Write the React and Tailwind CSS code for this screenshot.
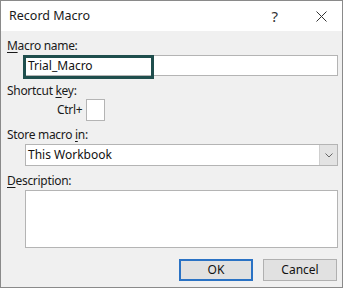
import React from 'react';

const font = { fontFamily: '"Noto Sans", "Liberation Sans", sans-serif' };

const Label = ({ pre, u, post, className = '' }) => (
  <div className={`h-[16px] leading-[16px] text-[12px] tracking-[-0.3px] text-[#1a1a1a] ${className}`}>
    {pre}
    <span className="underline underline-offset-2">{u}</span>
    {post}
  </div>
);

const RecordMacro = () => {
  return (
    <div className="w-[344px] h-[288px] bg-white" style={font}>
      <div className="w-[343px] h-[288px] border border-[#8a8a8a] flex flex-col">
        {/* title bar */}
        <div className="h-[30px] bg-white flex items-center pl-[8px] pr-[15px]">
          <span className="text-[12.5px] text-[#1a1a1a] flex-1">Record Macro</span>
          <span className="text-[15px] text-[#333] mr-[38px]">?</span>
          <svg width="11" height="11" viewBox="0 0 11 11">
            <path d="M0.5 0.5 L10.5 10.5 M10.5 0.5 L0.5 10.5" stroke="#333" strokeWidth="1" />
          </svg>
        </div>

        {/* body */}
        <div className="flex-1 bg-[#f0f0f0] pl-[6px] pt-[7px]">
          <Label pre="" u="M" post="acro name:" />
          <div className="relative ml-[16px] mr-[4px] mt-[-1px] h-[24px]">
            <div className="ml-[2px] mt-[2px] h-[21px] bg-white border border-[#b4b4b4] flex items-center pl-[2px] text-[12px] text-[#111]">
              Trial_Macro
            </div>
            <div className="absolute left-0 top-0 w-[131px] h-[24px] border-[3px] border-[#1f4e4d]" />
          </div>

          <Label pre="Shortcut " u="k" post="ey:" className="mt-[4px]" />
          <div className="flex items-center ml-[50px] h-[22px]">
            <span className="text-[12px] tracking-[-0.3px] text-[#1a1a1a] w-[29px]">Ctrl+</span>
            <div className="w-[19px] h-[22px] bg-white border border-[#b4b4b4]" />
          </div>

          <Label pre="Store macro " u="i" post="n:" className="mt-[6px]" />
          <div className="ml-[18px] mr-[4px] mt-[1px] h-[22px] bg-white border border-[#b4b4b4] flex">
            <div className="flex-1 flex items-center pl-[2px] text-[12px] text-[#111]">This Workbook</div>
            <div className="w-[18px] bg-[#e3e3e3] border-l border-[#cfcfcf] flex items-center justify-center">
              <svg width="8" height="5" viewBox="0 0 8 5">
                <path d="M0.5 0.5 L4 4 L7.5 0.5" stroke="#666" strokeWidth="1" fill="none" />
              </svg>
            </div>
          </div>

          <Label pre="" u="D" post="escription:" className="mt-[7px]" />
          <div className="ml-[18px] mr-[4px] mt-[1px] h-[58px] bg-white border border-[#b4b4b4]" />

          <div className="flex justify-end gap-[10px] mr-[5px] mt-[11px]">
            <button className="w-[74px] h-[22px] bg-[#e1e1e1] border-2 border-[#2a72c4] text-[12px] text-[#111]">
              OK
            </button>
            <button className="w-[74px] h-[22px] bg-[#e1e1e1] border border-[#b0b0b0] text-[12px] text-[#111]">
              Cancel
            </button>
          </div>
        </div>
      </div>
    </div>
  );
};

export default function App() {
  return <RecordMacro />;
}
